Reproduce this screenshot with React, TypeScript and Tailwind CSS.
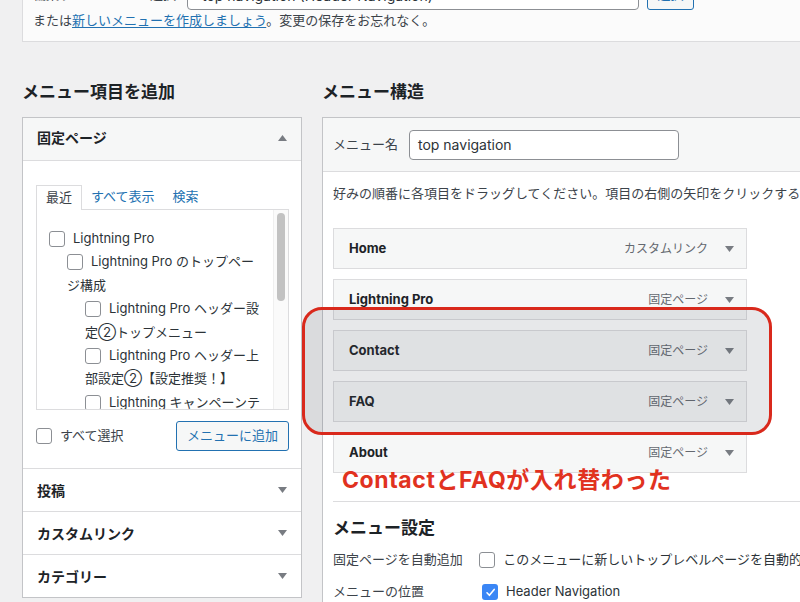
import React from 'react';

const pages = [
  { indent: 'pl-0', lines: ['Lightning Pro'] },
  { indent: 'pl-[18px]', lines: ['Lightning Pro のトップペー', 'ジ構成'] },
  { indent: 'pl-[36px]', lines: ['Lightning Pro ヘッダー設', '定②トップメニュー'] },
  { indent: 'pl-[36px]', lines: ['Lightning Pro ヘッダー上', '部設定②【設定推奨！】'] },
  { indent: 'pl-[36px]', lines: ['Lightning キャンペーンテ'] },
];

const menuItems = [
  { title: 'Home', type: 'カスタムリンク' },
  { title: 'Lightning Pro', type: '固定ページ' },
  { title: 'Contact', type: '固定ページ' },
  { title: 'FAQ', type: '固定ページ' },
  { title: 'About', type: '固定ページ' },
];

function Arrow({ up = false }: { up?: boolean }) {
  return (
    <svg width="9" height="6" viewBox="0 0 9 6" className="shrink-0">
      <polygon points={up ? '0,6 9,6 4.5,0' : '0,0 9,0 4.5,6'} fill="#787c82" />
    </svg>
  );
}

function Checkbox({ checked = false }: { checked?: boolean }) {
  if (checked) {
    return (
      <span className="inline-flex w-4 h-4 shrink-0 items-center justify-center rounded-[3px] bg-[#3a86f5]">
        <svg width="11" height="11" viewBox="0 0 11 11">
          <path d="M2 5.8 L4.4 8.3 L9.2 2.4" stroke="#fff" strokeWidth="1.6" fill="none" strokeLinecap="round" strokeLinejoin="round" />
        </svg>
      </span>
    );
  }
  return <span className="inline-block w-4 h-4 shrink-0 rounded-[3px] border border-[#8c8f94] bg-white align-[-3px]" />;
}

function Section({ title }: { title: string }) {
  return (
    <div className="h-[43px] border-t border-[#dcdcde] flex items-center justify-between pl-[14px] pr-[14px]">
      <span className="text-[14px] font-bold text-[#1d2327]">{title}</span>
      <Arrow />
    </div>
  );
}

export default function App() {
  return (
    <div className="relative w-[800px] h-[602px] overflow-hidden bg-[#f0f0f1] text-[13px] text-[#3c434a] font-[Inter,'Noto_Sans_CJK_JP',sans-serif]">
      {/* Menu selector bar, scrolled half out of view */}
      <div className="ml-[22px] mt-[-30px] w-[800px] border border-[#dcdcde] bg-[#fbfbfb] pl-[10px] pt-[9px] pb-[11px]">
        <div className="flex items-center h-[30px]">
          <span className="w-[154px] text-[#3c434a]">編集するメニューを選択:</span>
          <div className="w-[452px] h-[30px] rounded-[4px] border border-[#8c8f94] bg-white flex items-center justify-between px-[14px] text-[14px] text-[#2c3338]">
            <span>top navigation (Header Navigation)</span>
            <svg width="10" height="6" viewBox="0 0 10 6">
              <path d="M1 1 L5 5 L9 1" stroke="#8c8f94" strokeWidth="1.4" fill="none" />
            </svg>
          </div>
          <div className="ml-[8px] w-[47px] h-[30px] rounded-[3px] border border-[#2271b1] bg-[#f6f7f7] text-[#2271b1] flex items-center justify-center">
            選択
          </div>
        </div>
        <p className="leading-[20px]">
          または<span className="text-[#2271b1] underline underline-offset-2">新しいメニューを作成しましょう</span>。変更の保存をお忘れなく。
        </p>
      </div>

      <div className="flex gap-[20px] pl-[22px] mt-[38px]">
        {/* Left column */}
        <div className="w-[280px] shrink-0">
          <h2 className="text-[17px] leading-[24px] font-bold text-[#1d2327]">メニュー項目を追加</h2>
          <div className="mt-[13px] border border-[#c3c4c7] bg-white">
            <div className="h-[43px] bg-[#f6f7f7] border-b border-[#dcdcde] flex items-center justify-between pl-[14px] pr-[14px] pb-[3px]">
              <span className="text-[14px] font-bold text-[#1d2327]">固定ページ</span>
              <Arrow up />
            </div>
            <div className="pt-[24px] pb-[17px] pl-[13px] pr-[12px]">
              <div className="flex h-[24px] items-stretch text-[13px]">
                <div className="relative z-10 -mb-px px-[9px] border border-b-0 border-[#dcdcde] bg-white flex items-center text-[#3c434a]">最近</div>
                <div className="px-[9px] flex items-center text-[#2271b1]">すべて表示</div>
                <div className="px-[9px] flex items-center text-[#2271b1]">検索</div>
              </div>
              <div className="h-[201px] border border-[#dcdcde] flex overflow-hidden">
                <div className="flex-1 pl-[12px] pt-[17px] overflow-hidden whitespace-nowrap text-[13px] leading-[23.4px] text-[#2c3338]">
                  {pages.map((p, i) => (
                    <div key={i} className={p.indent}>
                      <div className="flex items-center gap-[8px]">
                        <Checkbox />
                        <span>{p.lines[0]}</span>
                      </div>
                      {p.lines[1] && <div>{p.lines[1]}</div>}
                    </div>
                  ))}
                </div>
                <div className="w-[15px] shrink-0 border-l border-[#efefef] bg-[#fafafa] pt-[3px] flex justify-center">
                  <div className="w-[8px] h-[88px] rounded-full bg-[#c2c2c2]" />
                </div>
              </div>
              <div className="mt-[11px] flex items-center justify-between">
                <label className="flex items-center gap-[8px] text-[#3c434a]">
                  <Checkbox />
                  <span>すべて選択</span>
                </label>
                <div className="w-[113px] h-[30px] rounded-[3px] border border-[#2271b1] bg-[#f6f7f7] text-[#2271b1] flex items-center justify-center">
                  メニューに追加
                </div>
              </div>
            </div>
            <Section title="投稿" />
            <Section title="カスタムリンク" />
            <Section title="カテゴリー" />
          </div>
        </div>

        {/* Right column */}
        <div className="w-[520px] shrink-0">
          <h2 className="text-[17px] leading-[24px] font-bold text-[#1d2327]">メニュー構造</h2>
          <div className="mt-[13px] border border-[#c3c4c7] bg-white">
            <div className="h-[54px] bg-[#f6f7f7] border-b border-[#dcdcde] flex items-center pl-[10px]">
              <span className="w-[76px] text-[#3c434a]">メニュー名</span>
              <div className="w-[270px] h-[30px] rounded-[4px] border border-[#8c8f94] bg-white flex items-center px-[8px] text-[14px] text-[#2c3338]">
                top navigation
              </div>
            </div>
            <div className="pl-[10px] pt-[11px]">
              <p className="leading-[20px] whitespace-nowrap text-[#3c434a]">
                好みの順番に各項目をドラッグしてください。項目の右側の矢印をクリックすると、追加の設定オプションが表示されます。
              </p>
              <div className="mt-[25px] w-[414px] flex flex-col gap-[10px]">
                {menuItems.map((m) => (
                  <div key={m.title} className="h-[41px] border border-[#dcdcde] bg-[#f6f7f7] flex items-center pl-[15px] pr-[12px]">
                    <span className="flex-1 text-[13px] font-bold text-[#1d2327]">{m.title}</span>
                    <span className="text-[12px] text-[#646970] mr-[17px]">{m.type}</span>
                    <Arrow />
                  </div>
                ))}
              </div>
              <div className="mt-[28px] border-t border-[#dcdcde] pt-[14px] pb-[20px]">
                <h3 className="text-[17px] leading-[24px] font-bold text-[#1d2327]">メニュー設定</h3>
                <div className="mt-[4px] h-[32px] flex items-center">
                  <span className="w-[149px] text-[#3c434a]">固定ページを自動追加</span>
                  <Checkbox />
                  <span className="ml-[8px] whitespace-nowrap text-[#2c3338]">このメニューに新しいトップレベルページを自動的に追加</span>
                </div>
                <div className="h-[32px] flex items-center">
                  <span className="w-[149px] text-[#3c434a]">メニューの位置</span>
                  <Checkbox checked />
                  <span className="ml-[8px] text-[#2c3338]">Header Navigation</span>
                </div>
              </div>
            </div>
          </div>
        </div>
      </div>

      {/* Annotation overlay */}
      <div className="absolute left-[302px] top-[307px] w-[470px] h-[128px] rounded-[20px] border-[3px] border-[#d9291c] bg-[rgba(70,80,95,0.13)]" />
      <div className="absolute left-[342px] top-[464px] text-[23px] leading-[32px] tracking-[0.6px] font-bold text-[#e1321f] whitespace-nowrap">
        ContactとFAQが入れ替わった
      </div>
    </div>
  );
}
